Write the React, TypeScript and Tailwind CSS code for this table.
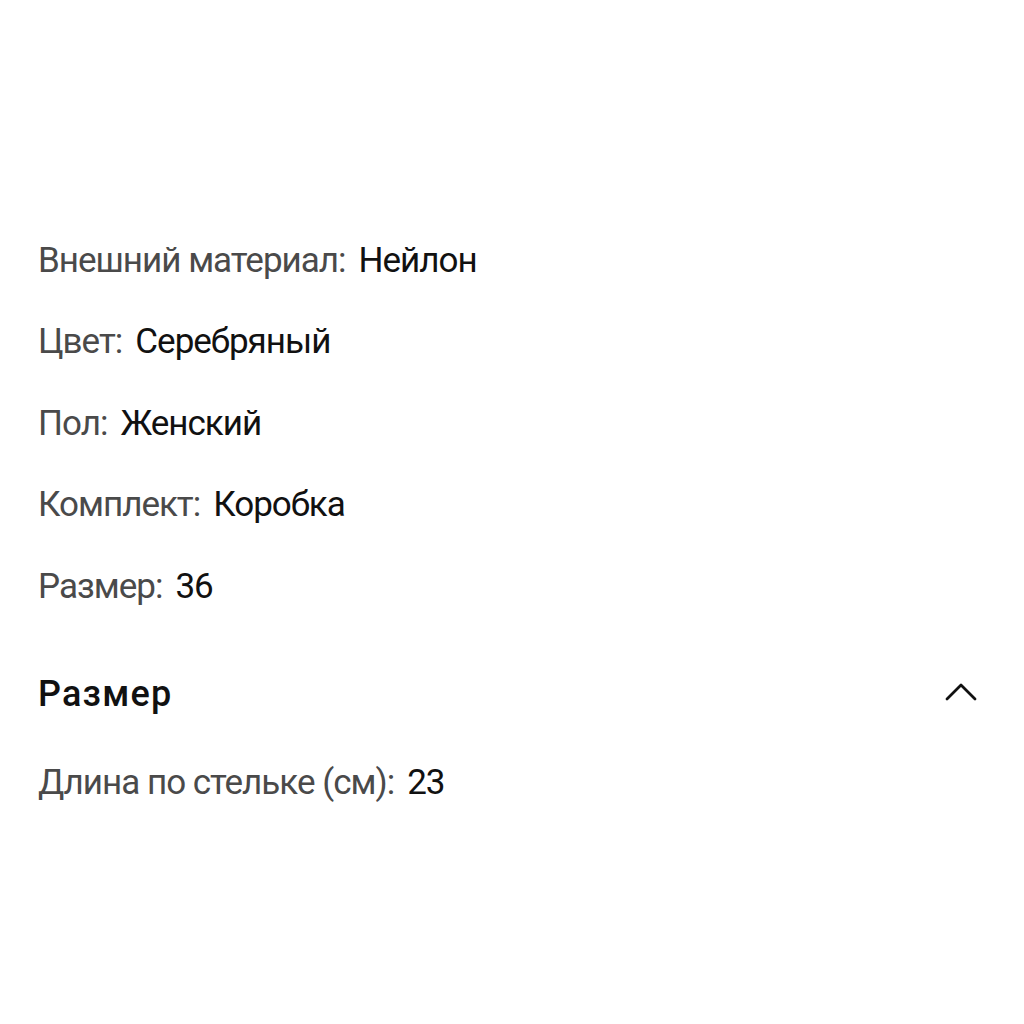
const specs = [
  { label: "Внешний материал", value: "Нейлон" },
  { label: "Цвет", value: "Серебряный" },
  { label: "Пол", value: "Женский" },
  { label: "Комплект", value: "Коробка" },
  { label: "Размер", value: "36" },
];

function SpecRow({ label, value }: { label: string; value: string }) {
  return (
    <div className="flex items-center h-[81.5px] text-[35px] tracking-[-1px]">
      <span className="text-[#4a4a4a]">{label}:</span>
      <span className="ml-[13px] text-[#111]">{value}</span>
    </div>
  );
}

export default function App() {
  return (
    <div
      className="w-[1024px] h-[1024px] bg-white pl-[38px] pr-[47px] pt-[220px]"
      style={{ fontFamily: "Roboto, 'Noto Sans', sans-serif" }}
    >
      {specs.map((s) => (
        <SpecRow key={s.label} label={s.label} value={s.value} />
      ))}

      {/* Size section */}
      <div className="flex items-center justify-between h-[64px] mt-[34px]">
        <h2 className="text-[36px] font-medium text-[#111] tracking-[1.2px]">Размер</h2>
        <svg width="32" height="20" viewBox="0 0 32 20" fill="none" className="-mt-[2px]">
          <path d="M2 16 L16 2 L30 16" stroke="#111" strokeWidth="2.8" strokeLinecap="round" strokeLinejoin="round" />
        </svg>
      </div>
      <div className="mt-[17px]">
        <SpecRow label="Длина по стельке (см)" value="23" />
      </div>
    </div>
  );
}
